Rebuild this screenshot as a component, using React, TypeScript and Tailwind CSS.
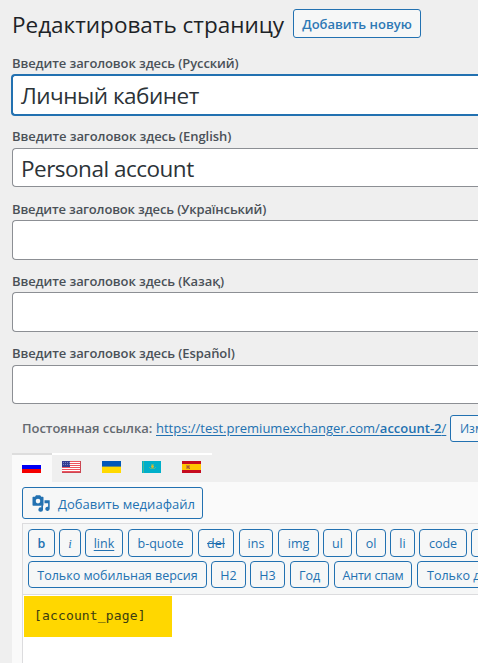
import React from "react";

const font = "font-['Open_Sans','Noto_Sans',sans-serif]";

function TitleField({ label, value, labelClass, inputClass }: { label: string; value?: string; labelClass: string; inputClass: string }) {
  return (
    <div className="flex flex-col">
      <label className={`ml-3 block self-start whitespace-nowrap text-[13px] font-semibold leading-[20px] text-[#4a5158] ${labelClass}`}>{label}</label>
      <div className={`flex items-center rounded-l-[4px] bg-white text-[22.5px] leading-[30px] tracking-[-0.5px] text-[#2c3338] ${inputClass}`}>{value}</div>
    </div>
  );
}

function Tag({ children, className }: { children: React.ReactNode; className: string }) {
  return (
    <button className={`flex shrink-0 items-center justify-center whitespace-nowrap rounded-[4px] border border-[#2271b1] bg-[#f6f7f7] pt-[3px] text-[12.5px] text-[#2271b1] ${className}`}>
      {children}
    </button>
  );
}

function Flag({ children }: { children: React.ReactNode }) {
  return (
    <svg width="19" height="12" viewBox="0 0 19 12" shapeRendering="crispEdges">
      {children}
    </svg>
  );
}

function MediaIcon() {
  return (
    <svg className="mt-[2px]" width="18" height="18" viewBox="0 0 18 18" fill="#2271b1">
      <path fillRule="evenodd" d="M1.300 1.800H3L4 .3h4.200L9.200 1.800h1.600q.7 0 .7.8v7.400q0 .8-.7.8H1.300q-.8 0-.8-.8V2.600q0-.8.8-.8ZM6 3.800a2.300 2.300 0 1 0 0 4.600a2.300 2.300 0 0 0 0-4.600Z" />
      <path d="M12.500 5.200h5.200v8.600a2.200 2.100 0 1 1-1.600-2V8.200h-3.600ZM11 9.300v5.400a2.300 2.200 0 1 1-1.700-2.200V11Z" />
    </svg>
  );
}

export default function App() {
  return (
    <div className={`flex h-[663px] w-[478px] flex-col overflow-hidden bg-[#efefef] ${font}`}>
      <header className="flex h-[53px] shrink-0 items-start pl-3">
        <h1 className="mt-[9px] w-[281px] shrink-0 whitespace-nowrap text-[22.5px] leading-[32px] text-[#1d2327]">Редактировать страницу</h1>
        <button className="mt-[9px] h-[29px] w-[128px] whitespace-nowrap rounded-[3px] border border-[#2271b1] bg-[#f6f7f7] pt-[2px] text-[13px] font-semibold text-[#2e79b5]">Добавить новую</button>
      </header>

      <section className="flex shrink-0 flex-col">
        <TitleField label="Введите заголовок здесь (Русский)" value="Личный кабинет" labelClass="tracking-[-0.1px]" inputClass="mt-px ml-[11px] h-[42px] border-2 border-r-0 border-[#2271b1] pl-2 pt-[2px]" />
        <TitleField label="Введите заголовок здесь (English)" value="Personal account" labelClass="mt-[10px] tracking-[-0.07px]" inputClass="mt-[2px] ml-3 h-[39px] border border-r-0 border-[#8c8f94] pl-2 pt-[2px]" />
        <TitleField label="Введите заголовок здесь (Український)" labelClass="mt-[12px] tracking-[-0.15px]" inputClass="mt-px ml-3 h-[40px] border border-r-0 border-[#8c8f94]" />
        <TitleField label="Введите заголовок здесь (Казақ)" labelClass="mt-[11px] tracking-[-0.1px]" inputClass="mt-px ml-3 h-[40px] border border-r-0 border-[#8c8f94]" />
        <TitleField label="Введите заголовок здесь (Español)" labelClass="mt-[11px] tracking-[-0.1px]" inputClass="mt-[2px] ml-3 h-[39px] border border-r-0 border-[#8c8f94]" />
      </section>

      <div className="mt-[11px] flex h-[27px] shrink-0 items-center whitespace-nowrap pl-[22px] text-[13px]">
        <span className="w-[134px] shrink-0 font-semibold tracking-[-0.04px] text-[#646970]">Постоянная ссылка:</span>
        <a className="w-[294px] shrink-0 text-[#2271b1] underline underline-offset-2">https://test.premiumexchanger.com/<b className="font-semibold">account-2</b>/</a>
        <button className="h-[27px] w-[80px] shrink-0 rounded-[3px] border border-[#2271b1] bg-[#f6f7f7] pl-[9px] pt-px text-left text-[12px] text-[#2271b1]">Изменить</button>
      </div>

      <nav className="ml-3 mt-[11px] flex h-[29px] shrink-0">
        <div className="flex w-10 items-start justify-start border-t-2 border-[#dddddd] bg-[#fafafa] pl-[10px] pt-[6px]">
          <Flag><path fill="#fff" d="M0 0h19v4H0z" /><path fill="#0000f5" d="M0 4h19v4H0z" /><path fill="#f50000" d="M0 8h19v4H0z" /></Flag>
        </div>
        <div className="flex w-10 border-t-2 border-white pl-[10px] pt-[6px]">
          <Flag>
            <path fill="#fff" d="M0 0h19v12H0z" />
            <path stroke="#ed5560" d="M0 .5h19M0 2.500h19M0 4.500h19M0 6.500h19M0 8.500h19M0 10.500h19" />
            <path fill="#333c91" d="M0 0h8v6H0z" /><path stroke="#7780bd" strokeDasharray="1 1" d="M1 1.500h7M1 3.500h7" />
            <path fill="#cb4652" d="M0 11h19v1H0zM18 0h1v12h-1z" />
          </Flag>
        </div>
        <div className="flex w-10 border-t-2 border-white pl-[10px] pt-[6px]">
          <Flag><path fill="#0057b8" d="M0 0h19v6H0z" /><path fill="#ffd900" d="M0 6h19v6H0z" /><path fill="#6a8a70" d="M0 5h19v1H0z" /></Flag>
        </div>
        <div className="flex w-10 border-t-2 border-white pl-[10px] pt-[6px]">
          <Flag><path fill="#00afca" d="M0 0h19v12H0z" /><path fill="#46b993" d="M1 0h1v12H1z" /><path fill="#5cb58a" d="M9 3h3v5H9zM7 6h1v1H7zM13 6h1v1h-1zM8 7h5v1H8z" /><path fill="#d0b92f" d="M10 4h1v3h-1zM9 5h3v1H9z" /></Flag>
        </div>
        <div className="flex w-10 border-t-2 border-white pl-[10px] pt-[6px]">
          <Flag><path fill="#c60b1e" d="M0 0h19v12H0z" /><path fill="#ffc400" d="M0 3h19v6H0z" /><path fill="#d18d20" d="M4 4h4v4H4z" /><path fill="#a85a38" d="M5 5h2v2H5zM7 7h1v1H7z" /></Flag>
        </div>
      </nav>

      <main className="ml-3 flex min-h-0 flex-1 flex-col bg-[#fafafa] pl-[10px] pt-[5px]">
        <button className="flex h-[32px] w-[181px] shrink-0 items-center whitespace-nowrap rounded-[3px] border border-[#2271b1] bg-[#f6f7f7] pl-[9px] text-[13px] text-[#2271b1]">
          <MediaIcon />
          <span className="ml-2 pt-[3px] tracking-[0.02px]">Добавить медиафайл</span>
        </button>
        <div className="mt-1 flex min-h-0 flex-1 flex-col border-l border-t border-[#dcdcde] bg-white">
          <div className="flex h-[71px] shrink-0 flex-col overflow-hidden border-b border-[#dcdcde] bg-[#f6f7f7] pl-[5px] pt-[5px]">
            <div className="flex h-[28px]">
              <Tag className="w-[27px] font-semibold">b</Tag>
              <Tag className="ml-1 w-[22px] font-['Liberation_Serif',serif] italic">i</Tag>
              <Tag className="ml-1 w-[38px] underline underline-offset-2">link</Tag>
              <Tag className="ml-[5px] w-[65px]">b-quote</Tag>
              <Tag className="ml-[5px] w-[36px] line-through">del</Tag>
              <Tag className="ml-[5px] w-[34px]">ins</Tag>
              <Tag className="ml-[5px] w-[41px]">img</Tag>
              <Tag className="ml-1 w-[29px]">ul</Tag>
              <Tag className="ml-1 w-[30px]">ol</Tag>
              <Tag className="ml-1 w-[25px]">li</Tag>
              <Tag className="ml-1 w-[48px]">code</Tag>
              <Tag className="ml-1 w-[52px]">more</Tag>
            </div>
            <div className="mt-1 flex h-[27px]">
              <Tag className="w-[179px]">Только мобильная версия</Tag>
              <Tag className="ml-1 w-[35px]">H2</Tag>
              <Tag className="ml-1 w-[35px]">H3</Tag>
              <Tag className="ml-[5px] w-[39px]">Год</Tag>
              <Tag className="ml-[5px] w-[78px] tracking-[-0.2px]">Анти спам</Tag>
              <Tag className="ml-[5px] w-[180px] !justify-start pl-[9px]">Только десктоп версия</Tag>
            </div>
          </div>
          <div className="ml-px mt-px flex h-[41px] w-[148px] items-center bg-[#ffd700] pb-[2px] pl-[10px] font-['DejaVu_Sans_Mono',monospace] text-[13px] tracking-[0.15px] text-[#3b3d10]">[account_page]</div>
        </div>
      </main>
    </div>
  );
}
